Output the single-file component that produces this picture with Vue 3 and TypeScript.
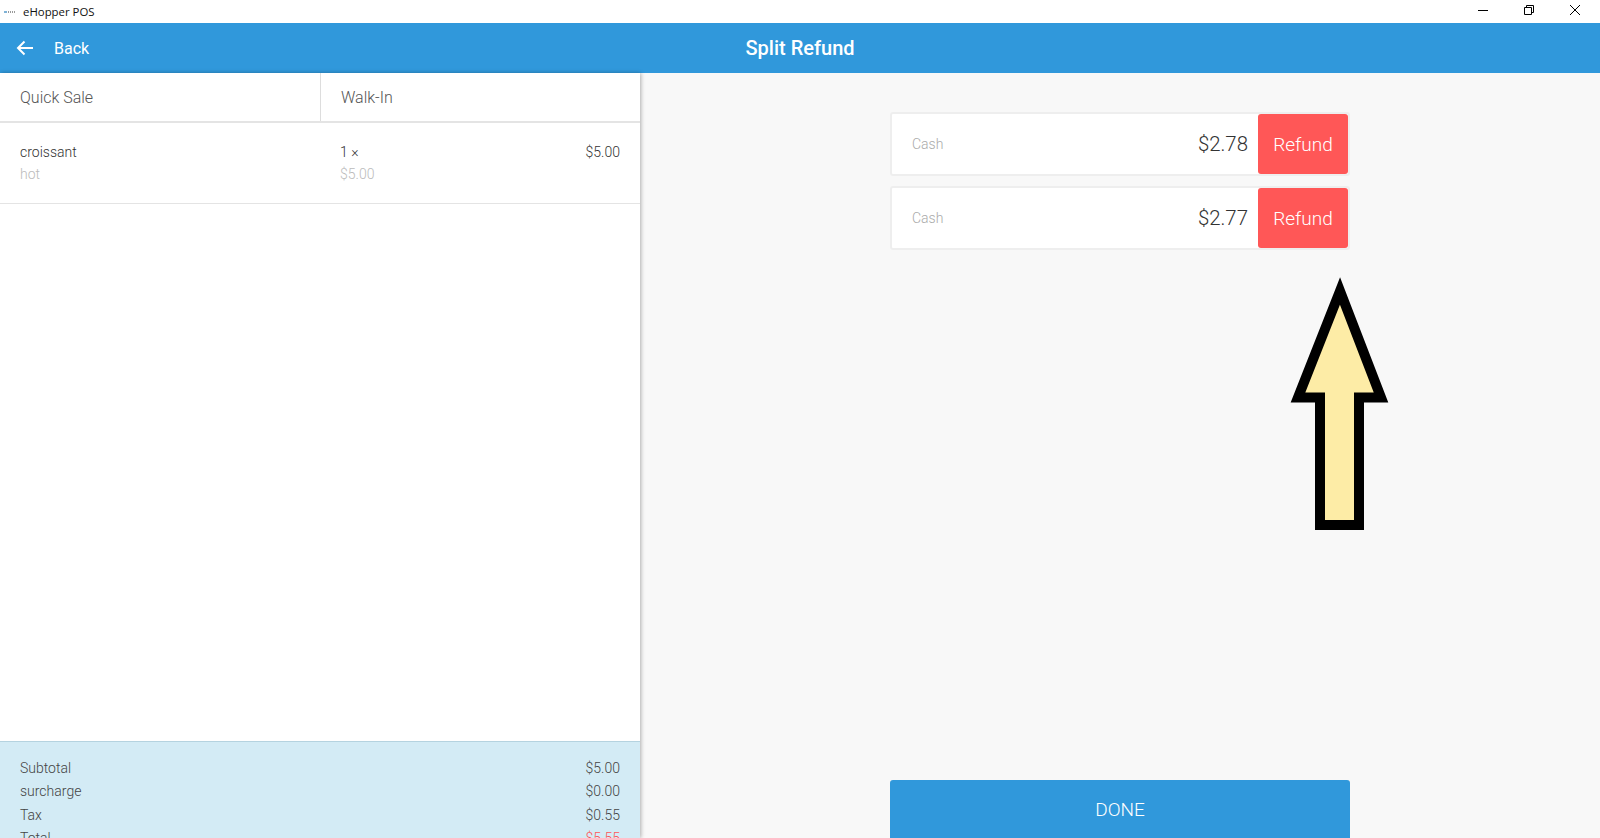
<script setup lang="ts">
const totals = [
  { label: 'Subtotal', value: '$5.00' },
  { label: 'surcharge', value: '$0.00' },
  { label: 'Tax', value: '$0.55' },
  { label: 'Total', value: '$5.55', red: true },
]
const payments = [
  { type: 'Cash', amount: '$2.78' },
  { type: 'Cash', amount: '$2.77' },
]
</script>

<template>
  <div class="window">
    <div class="titlebar">
      <svg class="app-icon" width="12" height="4" viewBox="0 0 12 4">
        <path d="M0 2h3" stroke="#7fb2d6" stroke-width="2" />
        <path d="M4 2h8" stroke="#9a9a9a" stroke-width="2" stroke-dasharray="1 1" />
      </svg>
      <span class="app-name">eHopper POS</span>
      <div class="win-controls">
        <svg width="46" height="23" viewBox="0 0 46 23">
          <path d="M18 10.500h10" stroke="#000" fill="none" />
        </svg>
        <svg width="46" height="23" viewBox="0 0 46 23">
          <path d="M18.500 7.500h7v7h-7zM20.500 7.500v-2h7v7h-2" stroke="#000" fill="none" />
        </svg>
        <svg width="46" height="23" viewBox="0 0 46 23">
          <path d="M18 5l10 10M28 5l-10 10" stroke="#000" fill="none" />
        </svg>
      </div>
    </div>

    <header class="topbar">
      <div class="back">
        <svg width="18" height="16" viewBox="0 0 18 16">
          <path d="M17 8H2M8.500 1.500 2 8l6.500 6.500" stroke="#fff" stroke-width="2" fill="none" />
        </svg>
        <span>Back</span>
      </div>
      <h1>Split Refund</h1>
    </header>

    <div class="content">
      <aside class="order">
        <div class="order-head">
          <div class="head-cell first">Quick Sale</div>
          <div class="head-cell">Walk-In</div>
        </div>
        <div class="order-list">
          <div class="item">
            <div class="item-col">
              <div class="main">croissant</div>
              <div class="sub">hot</div>
            </div>
            <div class="item-col">
              <div class="main">1 ×</div>
              <div class="sub">$5.00</div>
            </div>
            <div class="main price">$5.00</div>
          </div>
        </div>
        <div class="totals">
          <div v-for="row in totals" :key="row.label" class="total-row">
            <span>{{ row.label }}</span>
            <span :class="{ red: row.red }">{{ row.value }}</span>
          </div>
        </div>
      </aside>

      <main class="refunds">
        <div class="cards">
          <div v-for="(p, i) in payments" :key="i" class="card">
            <span class="type">{{ p.type }}</span>
            <span class="amount">{{ p.amount }}</span>
            <button class="refund">Refund</button>
          </div>
        </div>
        <button class="done">DONE</button>
      </main>
    </div>

    <svg class="callout" width="100" height="256" viewBox="1290 275 100 256">
      <path
        d="M1340 291 1298 397.500H1320V525H1359V397.500H1381Z"
        fill="#fdeca6"
        stroke="#000"
        stroke-width="10"
        stroke-miterlimit="10"
      />
    </svg>
  </div>
</template>

<style scoped>
.window {
  position: relative;
  width: 1600px;
  height: 838px;
  overflow: hidden;
  display: flex;
  flex-direction: column;
  background: #fff;
  font-family: Roboto, "Liberation Sans", sans-serif;
  color: #444;
}
.titlebar {
  height: 23px;
  flex: none;
  display: flex;
  align-items: center;
  padding-left: 4px;
}
.app-icon {
  margin-right: 7px;
}
.app-name {
  font-family: "Open Sans", "Noto Sans", sans-serif;
  font-size: 11.400px;
  color: #111;
}
.win-controls {
  margin-left: auto;
  display: flex;
  margin-right: 2px;
}
.topbar {
  height: 50px;
  flex: none;
  background: #3098db;
  color: #fff;
  display: flex;
  align-items: center;
  justify-content: center;
  position: relative;
}
.back {
  position: absolute;
  left: 16px;
  top: 0;
  height: 50px;
  display: flex;
  align-items: center;
  gap: 20px;
  font-size: 16px;
}
.topbar h1 {
  margin: 0;
  font-size: 20px;
  font-weight: 500;
}
.content {
  flex: 1;
  display: flex;
  min-height: 0;
}
.order {
  width: 640px;
  flex: none;
  display: flex;
  flex-direction: column;
  background: #fff;
  box-shadow: 1px 0 4px rgba(0, 0, 0, 0.3);
  z-index: 1;
}
.order-head {
  height: 50px;
  flex: none;
  display: flex;
  border-bottom: 2px solid #e4e4e4;
  box-sizing: border-box;
}
.head-cell {
  flex: 1;
  padding-left: 20px;
  display: flex;
  align-items: center;
  font-size: 16px;
  font-weight: 300;
  color: #555;
}
.head-cell.first {
  flex: none;
  width: 321px;
  box-sizing: border-box;
  border-right: 1px solid #ddd;
}
.order-list {
  flex: 1;
}
.item {
  height: 81px;
  box-sizing: border-box;
  display: flex;
  padding: 19px 20px 0;
  border-bottom: 1px solid #e4e4e4;
  font-size: 14px;
  font-weight: 300;
  color: #333;
}
.item-col {
  flex: none;
  width: 320px;
}
.item-col + .item-col {
  width: 200px;
}
.main {
  line-height: 20px;
  height: 20px;
}
.sub {
  line-height: 20px;
  margin-top: 2px;
  color: #bbb;
  font-weight: 300;
}
.price {
  margin-left: auto;
}
.totals {
  height: 97px;
  flex: none;
  box-sizing: border-box;
  overflow: hidden;
  padding: 15px 20px 0;
  background: #d3ebf5;
  border-top: 1px solid #b5d3e0;
  font-size: 14px;
  font-weight: 300;
}
.total-row {
  display: flex;
  justify-content: space-between;
  height: 23.300px;
  line-height: 23px;
}
.red {
  color: #ff5555;
}
.refunds {
  flex: 1;
  background: #f8f8f8;
  display: flex;
  flex-direction: column;
  align-items: center;
  padding-top: 39px;
  min-width: 0;
}
.cards {
  flex: 1;
  width: 460px;
  display: flex;
  flex-direction: column;
  gap: 10px;
}
.card {
  height: 64px;
  box-sizing: border-box;
  display: flex;
  align-items: center;
  background: #fff;
  border: 2px solid #eee;
  border-radius: 3px;
}
.type {
  margin-left: 20px;
  font-size: 14px;
  font-weight: 300;
  color: #aaa;
}
.amount {
  margin-left: auto;
  margin-right: 10px;
  font-size: 20.400px;
  font-weight: 300;
  color: #333;
}
.refund {
  width: 90px;
  height: 60px;
  border: 0;
  border-radius: 3px;
  background: #ff5757;
  color: #fff;
  font-family: inherit;
  font-size: 19px;
  font-weight: 300;
  padding: 0;
}
.done {
  width: 460px;
  height: 58px;
  flex: none;
  border: 0;
  border-radius: 3px 3px 0 0;
  background: #3098db;
  color: #fff;
  font-family: inherit;
  font-size: 19px;
  font-weight: 300;
  padding: 1px 0 0;
}
.callout {
  position: absolute;
  left: 1290px;
  top: 275px;
}
</style>

<style>
html,
body {
  margin: 0;
  overflow: hidden;
}
</style>
